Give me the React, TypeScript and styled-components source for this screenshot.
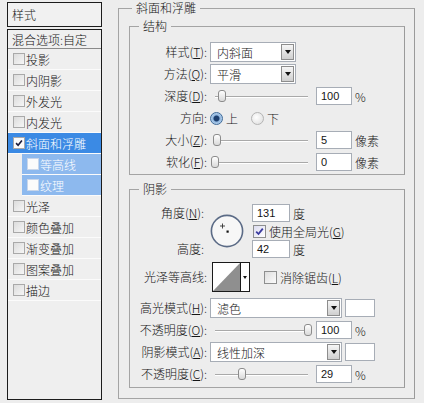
import React from 'react';
import styled, { createGlobalStyle } from 'styled-components';

const BG = '#ededed';

const Global = createGlobalStyle`
  html, body { margin: 0; padding: 0; background: ${BG}; }
  body {
    font-family: "Noto Sans CJK SC", "Liberation Sans", sans-serif;
    font-size: 12px;
    font-weight: 300;
    color: #151515;
  }
  * { box-sizing: border-box; }
`;

const Page = styled.div`
  width: 424px;
  height: 403px;
  display: flex;
  overflow: hidden;
  background: ${BG};
`;

/* ---------- left list ---------- */

const Left = styled.div`
  margin: 2px 0 0 7px;
  width: 95px;
  display: flex;
  flex-direction: column;
  gap: 2px;
`;

const StyleHeader = styled.div`
  height: 25px;
  border: 1px solid #1c1c1c;
  background: #f1f1f1;
  display: flex;
  align-items: center;
  padding-left: 4px;
`;

const StyleList = styled.div`
  height: 371px;
  border: 1px solid #1c1c1c;
  background: #efefef;
  display: flex;
  flex-direction: column;
`;

const BlendRow = styled.div`
  height: 19px;
  display: flex;
  align-items: center;
  padding-left: 4px;
  border-bottom: 1px solid #8a8a8a;
  white-space: nowrap;
`;

const Item = styled.div<{ $sel?: 'main' | 'sub'; $sub?: boolean }>`
  height: 21px;
  flex: none;
  display: flex;
  align-items: center;
  gap: 1px;
  padding-left: 5px;
  margin-left: ${p => (p.$sub ? 14 : 0)}px;
  border-bottom: 1px solid #fbfbfb;
  background: ${p =>
    p.$sel === 'main' ? '#3b8ae4' : p.$sel === 'sub' ? '#8db9ee' : 'transparent'};
  color: ${p => (p.$sel ? '#ffffff' : '#151515')};
  white-space: nowrap;
`;

const ListBox = styled.span<{ $on?: boolean; $light?: boolean }>`
  width: 12px;
  height: 12px;
  flex: none;
  border: 1px solid ${p => (p.$light ? '#c8d6ea' : '#a9a9a9')};
  background: ${p =>
    p.$on || p.$light ? '#fbfbfb' : 'linear-gradient(135deg, #dcdcdc, #f6f6f6)'};
  display: flex;
  align-items: center;
  justify-content: center;
`;

/* ---------- right groups ---------- */

const Right = styled.div`
  width: 297px;
  margin-left: 16px;
`;

const Group = styled.fieldset`
  margin: 0;
  padding: 0;
  min-width: 0;
  border: 1px solid #a4a4a4;
  border-right-color: #9a9a9a;
`;

const Legend = styled.legend<{ $inset: number }>`
  margin-left: ${p => p.$inset}px;
  padding: 0 4px;
  height: 16px;
  line-height: 16px;
  font-size: 12px;
  background: ${BG};
`;

const GroupBody = styled.div`
  padding: 2px 9px 10px 10px;
  display: flex;
  flex-direction: column;
  gap: 6px;
`;

const StructBody = styled.div`
  padding: 7px 0 1px 0;
  display: flex;
  flex-direction: column;
`;

const ShadowBody = styled.div`
  padding: 7px 0 2px 0;
  display: flex;
  flex-direction: column;
`;

const FormRow = styled.div`
  height: 22px;
  display: flex;
  align-items: center;
`;

const Label = styled.span`
  width: 77px;
  flex: none;
  text-align: right;
  margin-right: 3px;
  white-space: nowrap;
  line-height: 18px;
`;

const Key = styled.span`
  text-decoration: underline;
  text-underline-offset: 1px;
`;

const SelectBox = styled.div<{ $w: number }>`
  width: ${p => p.$w}px;
  height: 20px;
  border: 1px solid #a7adb6;
  background: #ffffff;
  display: flex;
  align-items: center;
  padding: 0 1px 0 6px;
`;

const SelectText = styled.span`
  flex: 1;
  white-space: nowrap;
`;

const ArrowBtn = styled.span`
  width: 13px;
  height: 16px;
  border: 1px solid #8d8d8d;
  background: linear-gradient(#f6f6f6, #cfcfcf);
  display: flex;
  align-items: center;
  justify-content: center;
  &::after {
    content: '';
    border-left: 3px solid transparent;
    border-right: 3px solid transparent;
    border-top: 4px solid #111;
  }
`;

const Swatch = styled.div`
  width: 30px;
  height: 18px;
  margin-left: 3px;
  border: 1px solid #a7adb6;
  background: #ffffff;
`;

const SliderWrap = styled.div`
  width: 100px;
  height: 22px;
  margin-right: 6px;
  padding: 0 2px 0 5px;
  display: flex;
  align-items: center;
`;

const Track = styled.div`
  position: relative;
  flex: 1;
  height: 2px;
  margin-top: 2px;
  border-top: 1px solid #a9a9a9;
  border-bottom: 1px solid #ffffff;
`;

const Thumb = styled.span`
  position: absolute;
  top: -7px;
  width: 8px;
  height: 12px;
  margin-left: -4px;
  border: 1px solid #8c8c8c;
  border-radius: 3px;
  background: linear-gradient(#ffffff, #d9d9d9);
`;

const NumBox = styled.div<{ $w: number }>`
  width: ${p => p.$w}px;
  height: 18px;
  border: 1px solid #a7adb6;
  background: #ffffff;
  display: flex;
  align-items: center;
  padding-left: 4px;
  font-family: "Liberation Sans", "DejaVu Sans", sans-serif;
  font-weight: 400;
  font-size: 11px;
`;

const Unit = styled.span`
  margin-left: 3px;
  white-space: nowrap;
`;

const Radio = styled.span<{ $on?: boolean }>`
  width: 13px;
  height: 13px;
  flex: none;
  border-radius: 50%;
  border: 1px solid ${p => (p.$on ? '#3d6a99' : '#b4b4b4')};
  background: ${p =>
    p.$on
      ? 'radial-gradient(circle, #1d3f6e 0 2.5px, #8fb6df 3.5px, #dbe8f5 100%)'
      : 'radial-gradient(circle at 40% 40%, #ffffff, #dadada)'};
`;

const RadioText = styled.span<{ $gap?: number }>`
  margin: 0 ${p => p.$gap ?? 0}px 0 3px;
`;

const CheckSq = styled.span<{ $on?: boolean }>`
  width: 13px;
  height: 13px;
  flex: none;
  border: 1px solid #8e8f8f;
  background: ${p =>
    p.$on ? 'linear-gradient(135deg, #dcdcf0, #ffffff)' : 'linear-gradient(135deg, #dedede, #fbfbfb)'};
  display: flex;
  align-items: center;
  justify-content: center;
`;

const CheckText = styled.span`
  margin-left: 3px;
  white-space: nowrap;
`;

const AngleBlock = styled.div`
  height: 54px;
  display: flex;
`;

const AngleLabels = styled.div`
  width: 77px;
  flex: none;
  display: flex;
  flex-direction: column;
  justify-content: space-between;
  align-items: flex-end;
`;

const Dial = styled.div`
  width: 34px;
  height: 34px;
  margin: 0 8px 0 3px;
  align-self: center;
`;

const AngleValues = styled.div`
  display: flex;
  flex-direction: column;
`;

const ValueRow = styled.div<{ $indent?: number }>`
  height: 18px;
  display: flex;
  align-items: center;
  padding-left: ${p => p.$indent ?? 0}px;
`;

const ContourRow = styled.div`
  height: 30px;
  margin: 4px 0 5px 0;
  display: flex;
  align-items: center;
`;

const ContourPicker = styled.div`
  width: 38px;
  height: 30px;
  margin: 0 14px 0 2px;
  border: 1px solid #1a1a1a;
  background: #ffffff;
  display: flex;
`;

const ContourArrow = styled.span`
  flex: 1;
  border-left: 1px solid #1a1a1a;
  display: flex;
  align-items: center;
  justify-content: center;
  &::after {
    content: '';
    border-left: 2.5px solid transparent;
    border-right: 2.5px solid transparent;
    border-top: 3px solid #111;
  }
`;

/* ---------- small widgets ---------- */

const Select = ({ w, children }: { w: number; children: React.ReactNode }) => (
  <SelectBox $w={w}>
    <SelectText>{children}</SelectText>
    <ArrowBtn />
  </SelectBox>
);

const Slider = ({ value }: { value: number }) => (
  <SliderWrap>
    <Track>
      <Thumb style={{ left: `${value * 100}%` }} />
    </Track>
  </SliderWrap>
);

const Tick = ({ color, size = 9 }: { color: string; size?: number }) => (
  <svg width={size} height={size} viewBox="0 0 9 9">
    <path d="M1.2 4.6 L3.5 7 L7.8 1.6" fill="none" stroke={color} strokeWidth="1.8" />
  </svg>
);

const items: { name: string; sel?: 'main' | 'sub'; sub?: boolean; on?: boolean }[] = [
  { name: '投影' },
  { name: '内阴影' },
  { name: '外发光' },
  { name: '内发光' },
  { name: '斜面和浮雕', sel: 'main', on: true },
  { name: '等高线', sel: 'sub', sub: true },
  { name: '纹理', sel: 'sub', sub: true },
  { name: '光泽' },
  { name: '颜色叠加' },
  { name: '渐变叠加' },
  { name: '图案叠加' },
  { name: '描边' },
];

export default function App() {
  return (
    <>
      <Global />
      <Page>
        <Left>
          <StyleHeader>样式</StyleHeader>
          <StyleList>
            <BlendRow>混合选项:自定</BlendRow>
            {items.map(it => (
              <Item key={it.name} $sel={it.sel} $sub={it.sub}>
                <ListBox $on={it.on} $light={it.sel === 'sub'}>
                  {it.on && <Tick color="#1b1b3a" size={8} />}
                </ListBox>
                {it.name}
              </Item>
            ))}
          </StyleList>
        </Left>

        <Right>
          <Group>
            <Legend $inset={13}>斜面和浮雕</Legend>
            <GroupBody>
              <Group>
                <Legend $inset={9}>结构</Legend>
                <StructBody>
                  <FormRow>
                    <Label>样式(<Key>T</Key>):</Label>
                    <Select w={86}>内斜面</Select>
                  </FormRow>
                  <FormRow>
                    <Label>方法(<Key>Q</Key>):</Label>
                    <Select w={86}>平滑</Select>
                  </FormRow>
                  <FormRow>
                    <Label>深度(<Key>D</Key>):</Label>
                    <Slider value={0.08} />
                    <NumBox $w={36}>100</NumBox>
                    <Unit>%</Unit>
                  </FormRow>
                  <FormRow>
                    <Label>方向:</Label>
                    <Radio $on />
                    <RadioText $gap={13}>上</RadioText>
                    <Radio />
                    <RadioText>下</RadioText>
                  </FormRow>
                  <FormRow>
                    <Label>大小(<Key>Z</Key>):</Label>
                    <Slider value={0.02} />
                    <NumBox $w={36}>5</NumBox>
                    <Unit>像素</Unit>
                  </FormRow>
                  <FormRow>
                    <Label>软化(<Key>F</Key>):</Label>
                    <Slider value={0} />
                    <NumBox $w={36}>0</NumBox>
                    <Unit>像素</Unit>
                  </FormRow>
                </StructBody>
              </Group>

              <Group>
                <Legend $inset={9}>阴影</Legend>
                <ShadowBody>
                  <AngleBlock>
                    <AngleLabels>
                      <Label>角度(<Key>N</Key>):</Label>
                      <Label>高度:</Label>
                    </AngleLabels>
                    <Dial>
                      <svg width="34" height="34" viewBox="0 0 34 34">
                        <circle cx="17" cy="17" r="15.6" fill="#f7f7f7" stroke="#5b6b86" strokeWidth="1.6" />
                        <path d="M12.5 9.5 v5 M10 12 h5" stroke="#333" strokeWidth="0.9" />
                        <rect x="16.5" y="16.5" width="2.2" height="2.2" fill="#111" />
                      </svg>
                    </Dial>
                    <AngleValues>
                      <ValueRow>
                        <NumBox $w={38}>131</NumBox>
                        <Unit>度</Unit>
                      </ValueRow>
                      <ValueRow $indent={1}>
                        <CheckSq $on>
                          <Tick color="#3a3a9e" />
                        </CheckSq>
                        <CheckText>使用全局光(<Key>G</Key>)</CheckText>
                      </ValueRow>
                      <ValueRow>
                        <NumBox $w={38}>42</NumBox>
                        <Unit>度</Unit>
                      </ValueRow>
                    </AngleValues>
                  </AngleBlock>

                  <ContourRow>
                    <Label>光泽等高线:</Label>
                    <ContourPicker>
                      <svg width="27" height="28" viewBox="0 0 27 28">
                        <polygon points="0,28 27,0 27,28" fill="#8f8f8f" />
                      </svg>
                      <ContourArrow />
                    </ContourPicker>
                    <CheckSq />
                    <CheckText>消除锯齿(<Key>L</Key>)</CheckText>
                  </ContourRow>

                  <FormRow>
                    <Label>高光模式(<Key>H</Key>):</Label>
                    <Select w={132}>滤色</Select>
                    <Swatch />
                  </FormRow>
                  <FormRow>
                    <Label>不透明度(<Key>O</Key>):</Label>
                    <Slider value={1} />
                    <NumBox $w={36}>100</NumBox>
                    <Unit>%</Unit>
                  </FormRow>
                  <FormRow>
                    <Label>阴影模式(<Key>A</Key>):</Label>
                    <Select w={132}>线性加深</Select>
                    <Swatch />
                  </FormRow>
                  <FormRow>
                    <Label>不透明度(<Key>C</Key>):</Label>
                    <Slider value={0.29} />
                    <NumBox $w={36}>29</NumBox>
                    <Unit>%</Unit>
                  </FormRow>
                </ShadowBody>
              </Group>
            </GroupBody>
          </Group>
        </Right>
      </Page>
    </>
  );
}
